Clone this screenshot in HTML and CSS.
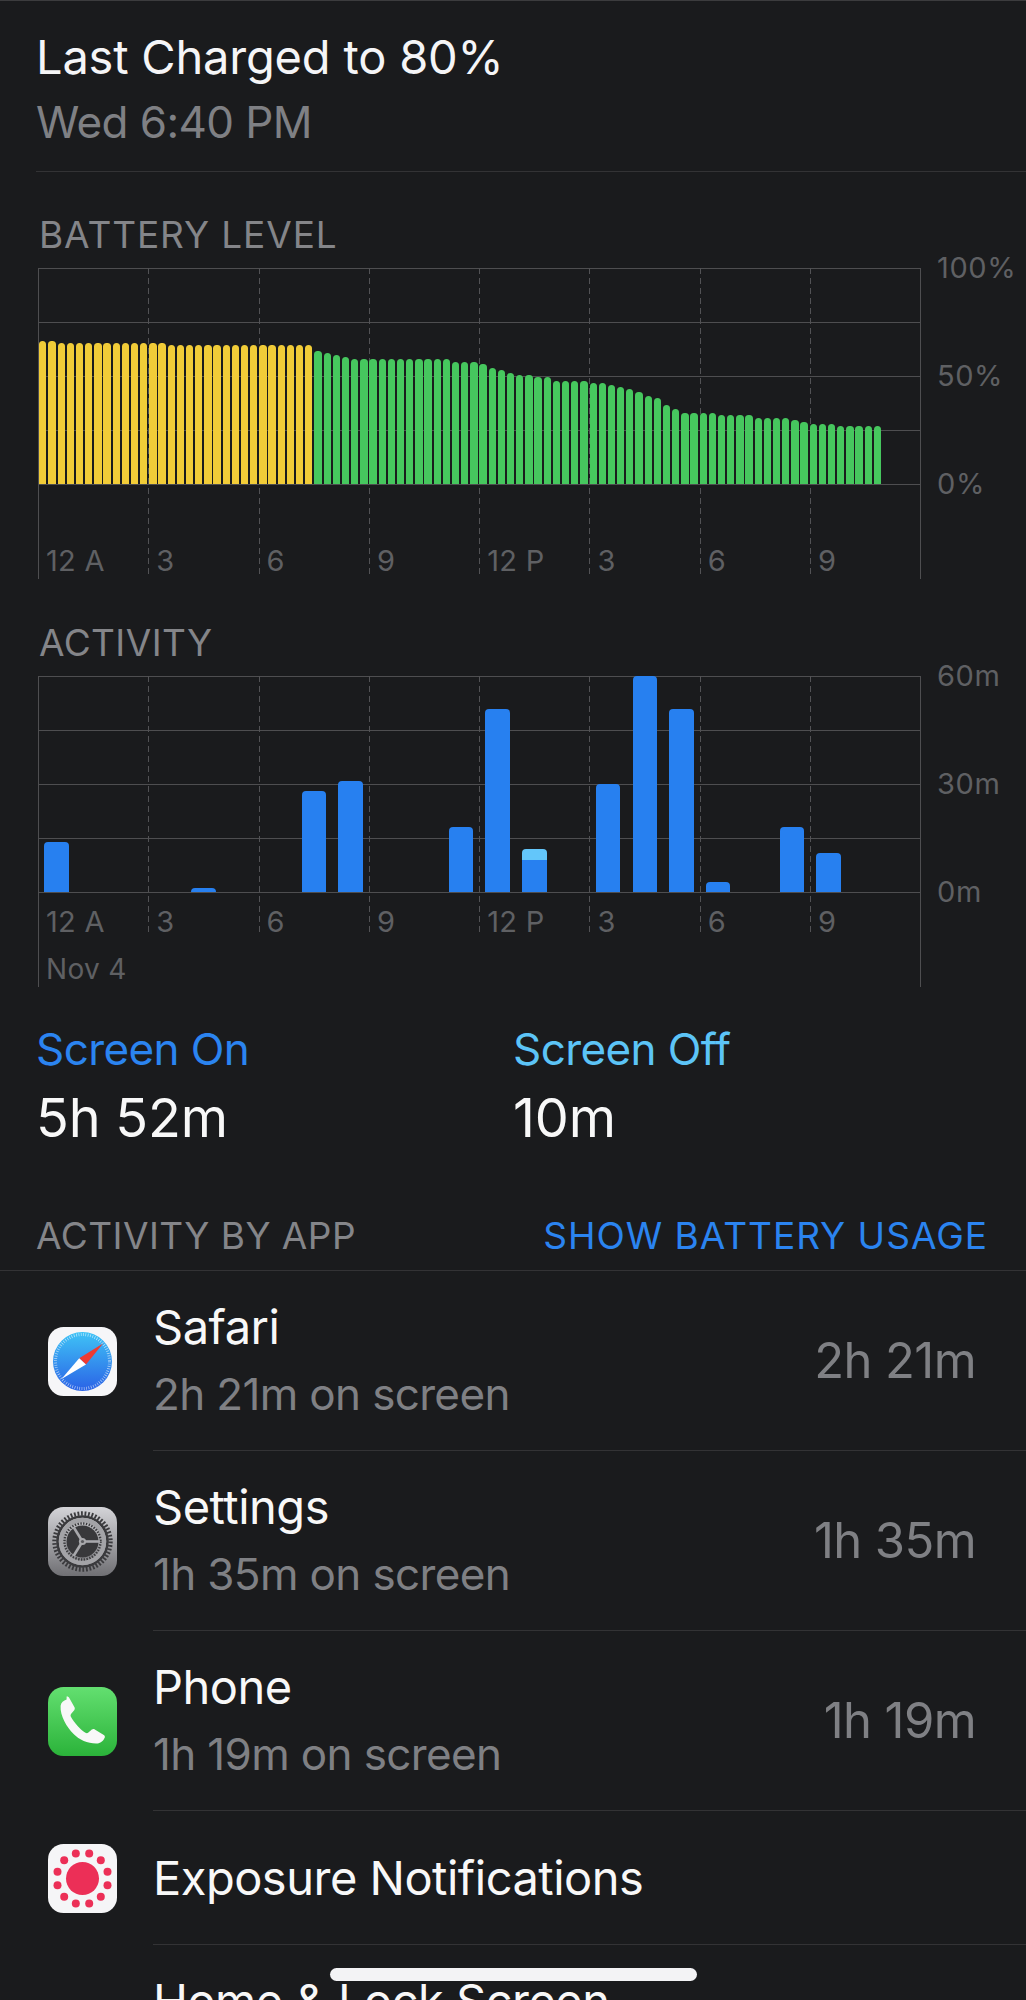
FILE: index.html
```html
<!DOCTYPE html>
<html lang="en">
<head>
<meta charset="utf-8">
<title>Battery</title>
<link rel="stylesheet" href="styles.css">
</head>
<body>
<main class="page">
  <header class="summary">
    <div class="summary-title">Last Charged to 80%</div>
    <div class="summary-sub">Wed 6:40 PM</div>
  </header>

  <h2 class="chart-title">BATTERY LEVEL</h2>
  <div class="chart-row">
    <div class="chart">
      <div class="hlines"><i></i><i></i><i></i><i></i></div>
      <div class="vcols vcols-battery">
        <div class="vcol"><span>12 A</span></div><div class="vcol"><span>3</span></div><div class="vcol"><span>6</span></div><div class="vcol"><span>9</span></div><div class="vcol"><span>12 P</span></div><div class="vcol"><span>3</span></div><div class="vcol"><span>6</span></div><div class="vcol"><span>9</span></div>
      </div>
      <div class="bars bars-battery">
        <b class="y" style="height:143px"></b><b class="y" style="height:143px"></b><b class="y" style="height:141px"></b><b class="y" style="height:141px"></b><b class="y" style="height:141px"></b><b class="y" style="height:141px"></b><b class="y" style="height:141px"></b><b class="y" style="height:141px"></b><b class="y" style="height:141px"></b><b class="y" style="height:141px"></b><b class="y" style="height:141px"></b><b class="y" style="height:141px"></b><b class="y" style="height:141px"></b><b class="y" style="height:141px"></b><b class="y" style="height:139px"></b><b class="y" style="height:139px"></b><b class="y" style="height:139px"></b><b class="y" style="height:139px"></b><b class="y" style="height:139px"></b><b class="y" style="height:139px"></b><b class="y" style="height:139px"></b><b class="y" style="height:139px"></b><b class="y" style="height:139px"></b><b class="y" style="height:139px"></b><b class="y" style="height:139px"></b><b class="y" style="height:139px"></b><b class="y" style="height:139px"></b><b class="y" style="height:139px"></b><b class="y" style="height:139px"></b><b class="y" style="height:139px"></b>
        <b style="height:133px"></b><b style="height:131px"></b><b style="height:129px"></b><b style="height:127px"></b><b style="height:125px"></b><b style="height:125px"></b><b style="height:125px"></b><b style="height:125px"></b><b style="height:125px"></b><b style="height:125px"></b><b style="height:125px"></b><b style="height:125px"></b><b style="height:125px"></b><b style="height:125px"></b><b style="height:125px"></b><b style="height:122px"></b><b style="height:122px"></b><b style="height:122px"></b><b style="height:120px"></b><b style="height:116px"></b><b style="height:114px"></b><b style="height:111px"></b><b style="height:109px"></b><b style="height:109px"></b><b style="height:107px"></b><b style="height:107px"></b><b style="height:103px"></b><b style="height:103px"></b><b style="height:103px"></b><b style="height:103px"></b><b style="height:101px"></b><b style="height:101px"></b><b style="height:99px"></b><b style="height:97px"></b><b style="height:95px"></b><b style="height:92px"></b><b style="height:88px"></b><b style="height:86px"></b><b style="height:79px"></b><b style="height:75px"></b><b style="height:71px"></b><b style="height:71px"></b><b style="height:71px"></b><b style="height:71px"></b><b style="height:69px"></b><b style="height:69px"></b><b style="height:69px"></b><b style="height:69px"></b><b style="height:66px"></b><b style="height:66px"></b><b style="height:66px"></b><b style="height:66px"></b><b style="height:64px"></b><b style="height:62px"></b><b style="height:60px"></b><b style="height:60px"></b><b style="height:60px"></b><b style="height:58px"></b><b style="height:58px"></b><b style="height:58px"></b><b style="height:58px"></b><b style="height:58px"></b>
      </div>
    </div>
    <div class="yaxis"><span>100%</span><span>50%</span><span>0%</span></div>
  </div>

  <h2 class="chart-title chart-title-second">ACTIVITY</h2>
  <div class="chart-row">
    <div class="chart">
      <div class="hlines"><i></i><i></i><i></i><i></i></div>
      <div class="vcols vcols-activity">
        <div class="vcol"><span>12 A</span><span class="date">Nov 4</span></div><div class="vcol"><span>3</span></div><div class="vcol"><span>6</span></div><div class="vcol"><span>9</span></div><div class="vcol"><span>12 P</span></div><div class="vcol"><span>3</span></div><div class="vcol"><span>6</span></div><div class="vcol"><span>9</span></div>
      </div>
      <div class="bars bars-activity">
        <b style="height:50px"></b><b></b><b></b><b></b><b style="height:4px"></b><b></b><b></b><b style="height:101px"></b><b style="height:111px"></b><b></b><b></b><b style="height:65px"></b><b style="height:183px"></b><b class="split" style="height:43px"></b><b></b><b style="height:108px"></b><b style="height:216px"></b><b style="height:183px"></b><b style="height:10px"></b><b></b><b style="height:65px"></b><b style="height:39px"></b><b></b><b></b>
      </div>
    </div>
    <div class="yaxis"><span>60m</span><span>30m</span><span>0m</span></div>
  </div>

  <section class="stats">
    <div class="stat">
      <div class="stat-label on">Screen On</div>
      <div class="stat-value">5h 52m</div>
    </div>
    <div class="stat">
      <div class="stat-label off">Screen Off</div>
      <div class="stat-value">10m</div>
    </div>
  </section>

  <div class="apps-head">
    <span>ACTIVITY BY APP</span>
    <span class="link">SHOW BATTERY USAGE</span>
  </div>

  <ul class="apps">
    <li class="app">
      <svg class="icon" viewBox="0 0 69 69" aria-hidden="true">
        <defs>
          <linearGradient id="sf" x1="0" y1="0" x2="0" y2="1"><stop offset="0" stop-color="#3fc3f6"/><stop offset="1" stop-color="#2a62e6"/></linearGradient>
          <linearGradient id="gr" x1="0" y1="0" x2="0" y2="1"><stop offset="0" stop-color="#d4d4d8"/><stop offset="1" stop-color="#707074"/></linearGradient>
          <linearGradient id="ph" x1="0" y1="0" x2="0" y2="1"><stop offset="0" stop-color="#63df70"/><stop offset="1" stop-color="#2bb33a"/></linearGradient>
        </defs>
        <rect width="69" height="69" rx="15.5" fill="#f6f6f8"/>
        <circle cx="34.5" cy="34.5" r="29.5" fill="url(#sf)"/>
        <circle cx="34.5" cy="34.5" r="27" fill="none" stroke="#fff" stroke-opacity=".65" stroke-width="3" stroke-dasharray=".7 1.66"/>
        <polygon points="55,16.5 38,37.6 31.2,31.2" fill="#ee3a33"/>
        <polygon points="13.5,52 38,37.6 31.2,31.2" fill="#fff"/>
      </svg>
      <div class="app-text"><div class="app-name">Safari</div><div class="app-sub">2h 21m on screen</div></div>
      <div class="app-time">2h 21m</div>
    </li>
    <li class="app">
      <svg class="icon" viewBox="0 0 69 69" aria-hidden="true">
        <rect width="69" height="69" rx="15.5" fill="url(#gr)"/>
        <circle cx="34.5" cy="34.5" r="28" fill="none" stroke="#3a3a3d" stroke-width="4.400" stroke-dasharray="1.8 1.72"/>
        <circle cx="34.5" cy="34.5" r="25" fill="none" stroke="#3a3a3d" stroke-width="2.6"/>
        <circle cx="34.5" cy="34.5" r="21.4" fill="none" stroke="#a3a3a7" stroke-width="4.600"/>
        <circle cx="34.5" cy="34.5" r="18" fill="none" stroke="#3a3a3d" stroke-width="2.4" stroke-dasharray="1.4 1.43"/>
        <circle cx="34.5" cy="34.5" r="16" fill="#38383b"/>
        <g stroke="#a8a8ac" stroke-width="2.6">
          <line x1="34.5" y1="34.5" x2="25.500" y2="20"/>
          <line x1="34.5" y1="34.5" x2="52" y2="34.5"/>
          <line x1="34.5" y1="34.5" x2="25.500" y2="49"/>
        </g>
        <circle cx="34.5" cy="34.5" r="3.6" fill="#a8a8ac"/>
        <circle cx="34.5" cy="34.5" r="1.6" fill="#5a5a5e"/>
      </svg>
      <div class="app-text"><div class="app-name">Settings</div><div class="app-sub">1h 35m on screen</div></div>
      <div class="app-time">1h 35m</div>
    </li>
    <li class="app">
      <svg class="icon" viewBox="0 0 69 69" aria-hidden="true">
        <rect width="69" height="69" rx="15.5" fill="url(#ph)"/>
        <path fill="#f8f8f8" d="M18.6 12.6c-3 .9-5.6 3.2-6 6.2-.6 10.300 6 21.200 13 28.200 6 6 15 10 24 9.500 3-.3 6-3 7.200-6 .3-1 0-2-1-2.600l-9-5.500c-1-.6-2-.5-3 .2l-3.400 3c-1 .8-2 .8-3 .2-3-2-6-4.500-8-7-2.500-2.800-5-6-6.500-9-.5-1-.4-2 .3-3l3-3.500c.7-.9.8-2 .3-3l-5.200-9.300c-.6-1.200-1.700-1.700-2.700-1.400z"/>
      </svg>
      <div class="app-text"><div class="app-name">Phone</div><div class="app-sub">1h 19m on screen</div></div>
      <div class="app-time">1h 19m</div>
    </li>
    <li class="app app-single">
      <svg class="icon" viewBox="0 0 69 69" aria-hidden="true">
        <rect width="69" height="69" rx="15.5" fill="#f5f5f7"/>
        <g fill="#ec2f57">
          <circle cx="34.5" cy="34.5" r="16.500"/>
          <circle cx="27.800" cy="9.500" r="4"/><circle cx="41.200" cy="9.500" r="4"/>
          <circle cx="52.800" cy="16.200" r="4"/><circle cx="59.500" cy="27.800" r="4"/>
          <circle cx="59.500" cy="41.200" r="4"/><circle cx="52.800" cy="52.800" r="4"/>
          <circle cx="41.200" cy="59.500" r="4"/><circle cx="27.800" cy="59.500" r="4"/>
          <circle cx="16.200" cy="52.800" r="4"/><circle cx="9.500" cy="41.200" r="4"/>
          <circle cx="9.500" cy="27.800" r="4"/><circle cx="16.200" cy="16.200" r="4"/>
        </g>
      </svg>
      <div class="app-text"><div class="app-name">Exposure Notifications</div></div>
    </li>
    <li class="app">
      <div class="icon"></div>
      <div class="app-text"><div class="app-name">Home &amp; Lock Screen</div><div class="app-sub">&nbsp;</div></div>
    </li>
  </ul>
  <div class="home-indicator"></div>
</main>
</body>
</html>
```

FILE: styles.css
```css
* { box-sizing: border-box; }
html, body { margin: 0; padding: 0; background: #1a1b1d; }
.page {
  position: relative;
  width: 1026px;
  height: 2000px;
  overflow: hidden;
  background: #1a1b1d;
  border-top: 1px solid #3c3c3e;
  font-family: Inter, "Liberation Sans", sans-serif;
  color: #f5f5f7;
}

.summary {
  margin: 30px 0 0 36px;
  padding-bottom: 23px;
  border-bottom: 1px solid #333335;
}
.summary-title { font-size: 47px; line-height: 52px; letter-spacing: -0.2px; }
.summary-sub { margin-top: 13px; font-size: 44px; line-height: 52px; letter-spacing: -0.6px; color: #7f8084; }

.chart-title {
  margin: 45px 0 15px 39px;
  font-size: 37px;
  line-height: 36px;
  font-weight: 400;
  letter-spacing: 0.9px;
  color: #848589;
}
.chart-title-second { margin-top: 46px; letter-spacing: 0.4px; }

.chart-row { display: flex; margin-left: 38px; }
.chart {
  position: relative;
  width: 883px;
  height: 311px;
  border-right: 1px solid #4e4e50;
}

.hlines {
  position: absolute;
  left: 0;
  right: 0;
  top: 0;
  height: 217px;
  display: flex;
  flex-direction: column;
  border-bottom: 1px solid #4e4e50;
}
.hlines i { flex: 1; border-top: 1px solid #4e4e50; }

.vcols { display: grid; grid-template-columns: repeat(8, 110.3px); height: 100%; }
.vcol {
  position: relative;
  display: flex;
  flex-direction: column;
  padding-left: 8px;
  font-size: 29px;
  line-height: 30px;
  letter-spacing: 0.3px;
  color: #5f6063;
  white-space: nowrap;
}
.vcol::before {
  content: "";
  position: absolute;
  left: 0;
  top: 0;
  width: 1px;
  background: repeating-linear-gradient(to bottom, #525255 0 6px, transparent 6px 10px);
}
.vcol:first-child::before { background: #4e4e50; height: 311px !important; }
.vcols-battery .vcol { padding-top: 278px; }
.vcols-battery .vcol::before { height: 306px; }
.vcols-activity .vcol { padding-top: 231px; }
.vcols-activity .vcol::before { height: 259px; }
.date { margin-top: 17px; font-size: 28px; }

.bars {
  position: absolute;
  left: 0;
  top: 0;
  height: 216px;
  display: flex;
  align-items: flex-end;
}
.bars-battery { padding-left: 1.2px; gap: 1.89px; }
.bars-battery b {
  flex: 0 0 7.3px;
  background: #46c75e;
  border-radius: 3.6px 3.6px 0 0;
}
.bars-battery b.y { background: #f1cc38; }
.bars-activity { padding-left: 6.3px; gap: 12.47px; }
.bars-activity b {
  flex: 0 0 24.3px;
  background: #2780f0;
  border-radius: 4px 4px 0 0;
}
.bars-activity b.split { background: linear-gradient(to bottom, #63c6fa 0 11px, #2780f0 11px); }

.yaxis {
  display: flex;
  flex-direction: column;
  justify-content: space-between;
  height: 246px;
  margin: -15px 0 0 16px;
  font-size: 29px;
  line-height: 30px;
  letter-spacing: 0.6px;
  color: #5f6063;
}

.stats { display: flex; margin: 37px 0 0 36px; }
.stat { width: 477px; }
.stat-label { font-size: 44px; line-height: 50px; letter-spacing: -0.6px; }
.stat-label.on { color: #2b84f0; }
.stat-label.off { color: #5cc4f7; }
.stat-value { margin-top: 14px; font-size: 54px; line-height: 60px; letter-spacing: -0.2px; color: #f8f8f8; }

.apps-head {
  display: flex;
  justify-content: space-between;
  align-items: center;
  height: 53px;
  margin-top: 70px;
  padding: 0 38px 17px 36px;
  border-bottom: 1px solid #333335;
  font-size: 37px;
  line-height: 36px;
  letter-spacing: 0.45px;
  color: #848589;
}
.link { color: #2b84f0; letter-spacing: 1px; }

.apps { list-style: none; margin: 0; padding: 0; }
.app {
  position: relative;
  display: flex;
  align-items: center;
  height: 180px;
  padding-left: 48px;
}
.app-single { height: 134px; }
.app::after {
  content: "";
  position: absolute;
  left: 153px;
  right: 0;
  bottom: 0;
  height: 1px;
  background: #333335;
}
.icon { flex: 0 0 69px; width: 69px; height: 69px; }
.app-text { flex: 1; margin: 0 0 4px 36px; }
.app-single .app-text { margin-bottom: 0; }
.app-name { font-size: 47px; line-height: 54px; letter-spacing: -0.5px; color: #f8f8f8; }
.app-sub { margin-top: 15px; font-size: 44px; line-height: 50px; letter-spacing: -0.65px; color: #7f8084; }
.app-time { margin-right: 50px; font-size: 49px; line-height: 54px; letter-spacing: -0.6px; color: #7f8084; }

.home-indicator {
  position: absolute;
  left: 330px;
  top: 1967px;
  width: 367px;
  height: 13px;
  border-radius: 6.5px;
  background: #f3f3f5;
}
```
